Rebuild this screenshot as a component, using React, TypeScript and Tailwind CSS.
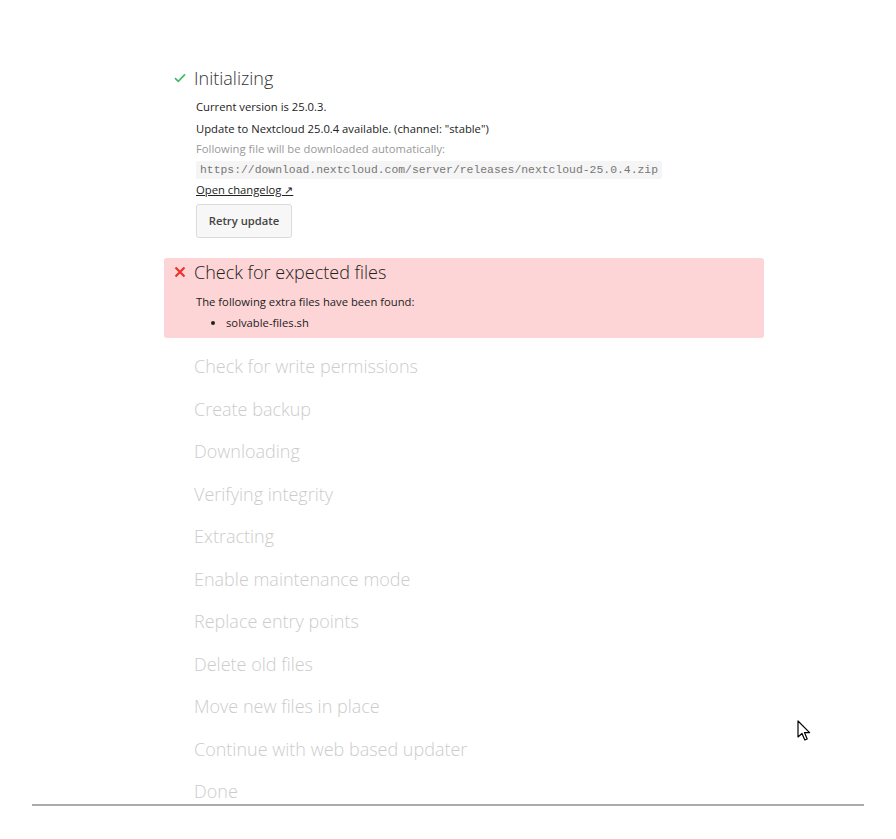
import React from 'react';

const pendingSteps = [
  'Check for write permissions',
  'Create backup',
  'Downloading',
  'Verifying integrity',
  'Extracting',
  'Enable maintenance mode',
  'Replace entry points',
  'Delete old files',
  'Move new files in place',
  'Continue with web based updater',
  'Done',
];

const CheckIcon = () => (
  <svg width="12" height="10" viewBox="0 0 12 10" className="shrink-0">
    <path d="M1 5.2 L4.3 8.4 L11 1.4" fill="none" stroke="#46ba61" strokeWidth="1.7" />
  </svg>
);

const CrossIcon = () => (
  <svg width="12" height="12" viewBox="0 0 12 12" className="shrink-0">
    <path d="M1.5 1.5 L10.5 10.5 M10.5 1.5 L1.5 10.5" fill="none" stroke="#e9322d" strokeWidth="2.2" />
  </svg>
);

const Cursor = () => (
  <svg width="14" height="22" viewBox="0 0 14 22" className="absolute left-[797px] top-[720px]">
    <path
      d="M1 1 L1 17 L5 13.5 L7.8 20 L10.2 19 L7.5 12.6 L12.6 12.6 Z"
      fill="#fff"
      stroke="#000"
      strokeWidth="1.2"
      strokeLinejoin="round"
    />
  </svg>
);

export default function App() {
  return (
    <div className="relative min-h-[839px] bg-white font-['Open_Sans',sans-serif] text-[#222]">
      <div className="mx-[32px] pt-[67px]">
        <div className="ml-[132px] w-[600px]">
          {/* finished step */}
          <div className="px-[10px]">
            <div className="flex h-[22px] items-center">
              <span className="flex w-[20px] items-center">
                <CheckIcon />
              </span>
              <h2 className="text-[18px] font-light leading-[22px] text-[#333]">Initializing</h2>
            </div>
            <div className="pl-[22px] text-[11.25px]">
              <p className="mt-[8px] leading-[20px]">Current version is 25.0.3.</p>
              <p className="mt-[2px] leading-[20px]">Update to Nextcloud 25.0.4 available. (channel: "stable")</p>
              <p className="leading-[20px] text-[#999]">Following file will be downloaded automatically:</p>
              <code className="mt-[2px] inline-block h-[18px] rounded-[2px] bg-[#f5f5f5] px-[4px] font-['Liberation_Mono',monospace] text-[11.4px] leading-[18px] text-[#777]">
                https://download.nextcloud.com/server/releases/nextcloud-25.0.4.zip
              </code>
              <p className="mt-[1px] leading-[20px]">
                <a className="underline">Open changelog ↗</a>
              </p>
              <button className="mt-[4px] h-[34px] w-[96px] rounded-[3px] border border-[#dbdbdb] bg-[#f7f7f7] text-[11.25px] font-semibold text-[#444]">
                Retry update
              </button>
            </div>
          </div>

          {/* failed step */}
          <div className="mt-[20px] h-[80px] rounded-[3px] bg-[#fed5d6] px-[10px] pt-[3px]">
            <div className="flex h-[22px] items-center">
              <span className="flex w-[20px] items-center">
                <CrossIcon />
              </span>
              <h2 className="text-[18px] font-light leading-[22px] text-[#222]">Check for expected files</h2>
            </div>
            <div className="pl-[22px] text-[11.25px]">
              <p className="mt-[9px] leading-[20px]">The following extra files have been found:</p>
              <ul className="mt-[1px] list-disc pl-[30px]">
                <li className="leading-[20px]">solvable-files.sh</li>
              </ul>
            </div>
          </div>

          {/* pending steps */}
          <div className="px-[10px] pt-[17px]">
            {pendingSteps.map((step, i) => (
              <h2
                key={step}
                className={`pl-[20px] text-[18px] font-light leading-[22.5px] text-[#cccccc] ${i === 0 ? '' : 'mt-[20px]'}`}
              >
                {step}
              </h2>
            ))}
          </div>
        </div>
        <div className="mt-[1px] h-[2px] bg-[#ababab]" />
      </div>
      <Cursor />
    </div>
  );
}
